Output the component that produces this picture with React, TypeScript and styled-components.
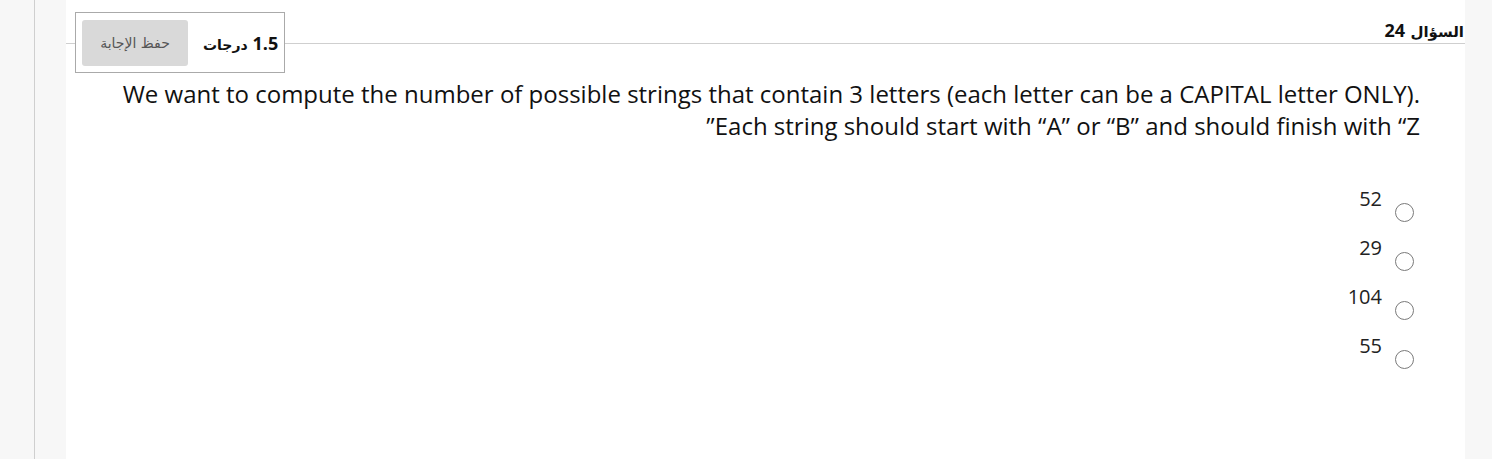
import React, { useState } from 'react';
import styled, { createGlobalStyle } from 'styled-components';

const GlobalStyle = createGlobalStyle`
    html, body {
        margin: 0;
        padding: 0;
        background: #f7f7f7;
    }
    body {
        font-family: 'Open Sans', 'DejaVu Sans', sans-serif;
        color: #111;
    }
`;

const Layout = styled.div`
    display: flex;
    min-height: 100vh;
`;

const Rail = styled.div`
    width: 34px;
    border-right: 1px solid #cfcfcf;
`;

const Gutter = styled.div`
    width: 31px;
`;

const Panel = styled.main`
    width: 1399px;
    background: #fff;
    direction: rtl;
`;

const Header = styled.header`
    display: flex;
    justify-content: space-between;
    align-items: flex-start;
    padding: 12px 1px 0 9px;
    background: linear-gradient(#cfcfcf, #cfcfcf) 0 43px / 100% 1px no-repeat;
`;

const Title = styled.h2`
    margin: 7px 0 0;
    font-family: 'DejaVu Sans', sans-serif;
    font-size: 15px;
    font-weight: 700;
    line-height: 22px;
    color: #111;
`;

const Num = styled.span`
    font-family: 'Open Sans', sans-serif;
    font-size: 18px;
    font-weight: 700;
`;

const PointsBox = styled.div`
    display: flex;
    align-items: center;
    gap: 15px;
    padding: 7px 6px 6px 6px;
    border: 1px solid #aaa;
    background: #fff;
`;

const Points = styled.span`
    font-family: 'DejaVu Sans', sans-serif;
    font-size: 14px;
    font-weight: 700;
    color: #111;
`;

const SaveButton = styled.button`
    width: 106px;
    height: 46px;
    border: none;
    border-radius: 3px;
    background: #d9d9d9;
    color: #555;
    font-family: 'DejaVu Sans', sans-serif;
    font-size: 14px;
    cursor: default;
`;

const Body = styled.section`
    padding: 5px 45px 0 34px;
`;

const Question = styled.p`
    margin: 0;
    font-size: 24px;
    line-height: 32px;
    color: #111;
`;

const Options = styled.ul`
    list-style: none;
    margin: 43px 0 0;
    padding: 0 6px 0 0;
    display: flex;
    flex-direction: column;
    gap: 22px;
`;

const Option = styled.li`
    display: flex;
    align-items: flex-start;
    gap: 13px;
    height: 27px;
`;

const Radio = styled.span<{ $checked: boolean }>`
    box-sizing: border-box;
    width: 19px;
    height: 19px;
    margin-top: 18px;
    border-radius: 50%;
    border: 1px solid #7a7a7a;
    background: #fff;
    box-shadow: ${p => (p.$checked ? 'inset 0 0 0 4px #fff, inset 0 0 0 10px #333' : 'none')};
    cursor: pointer;
`;

const Label = styled.span`
    font-size: 20px;
    line-height: 27px;
    color: #222;
`;

const answers = ['52', '29', '104', '55'];

export default function App() {
    const [selected, setSelected] = useState<string | null>(null);

    return (
        <>
            <GlobalStyle />
            <Layout>
                <Rail />
                <Gutter />
                <Panel>
                    <Header>
                        <Title>السؤال <Num>24</Num></Title>
                        <PointsBox>
                            <Points><Num>1.5</Num> درجات</Points>
                            <SaveButton>حفظ الإجابة</SaveButton>
                        </PointsBox>
                    </Header>
                    <Body>
                        <Question>
                            We want to compute the number of possible strings that contain 3 letters (each letter can be a CAPITAL letter ONLY). Each string should start with “A” or “B” and should finish with “Z”
                        </Question>
                        <Options>
                            {answers.map(a => (
                                <Option key={a} onClick={() => setSelected(a)}>
                                    <Radio $checked={selected === a} />
                                    <Label>{a}</Label>
                                </Option>
                            ))}
                        </Options>
                    </Body>
                </Panel>
            </Layout>
        </>
    );
}
